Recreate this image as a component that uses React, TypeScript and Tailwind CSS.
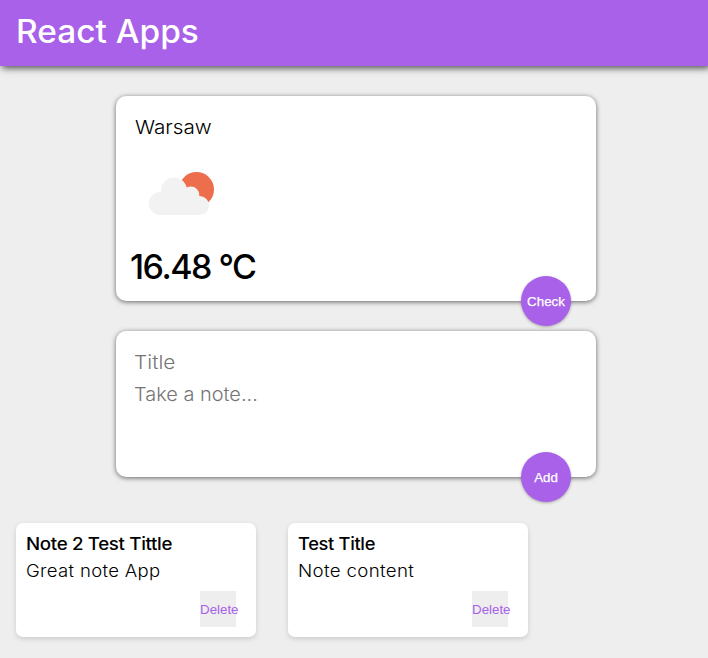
import React from "react";

const notes = [
  { title: "Note 2 Test Tittle", content: "Great note App", titleScale: "scale-x-[1.1]", contentScale: "scale-x-[1.09]" },
  { title: "Test Title", content: "Note content", titleScale: "scale-x-[1.075]", contentScale: "scale-x-[1.1]" },
];

function CloudIcon() {
  return (
    <svg className="block h-[46px] w-[68px]" viewBox="0 0 68 46">
      <circle cx="48.5" cy="20.5" r="17.5" fill="#ec6e4c" />
      <g fill="#f2f2f2">
        <circle cx="12.3" cy="34.5" r="11.5" />
        <circle cx="26" cy="21.5" r="13" />
        <circle cx="42.8" cy="26" r="8.500" />
        <circle cx="51.5" cy="36.500" r="9.500" />
        <path d="M12 29L26 23L42 27L51 34V46H12Z" />
      </g>
    </svg>
  );
}

function RoundButton({ label }: { label: string }) {
  return (
    <button className="absolute right-[25px] -bottom-[25px] flex size-[50px] items-center justify-center rounded-full bg-[#a861e8] pt-[2px] font-['Liberation_Sans',sans-serif] text-[13.333px] text-white shadow-[0_1px_3px_rgba(0,0,0,0.3)] [-webkit-text-stroke:0.25px_white]">
      {label}
    </button>
  );
}

export default function App() {
  return (
    <div className="h-[658px] overflow-hidden bg-[#eeeeee] font-['Inter',sans-serif] text-black">
      <header className="h-[66px] bg-[#a861e8] px-4 pt-[7px] shadow-[2px_2px_7px_rgba(0,0,0,0.7)]">
        <h1 className="text-[32px] leading-[49px] font-medium whitespace-nowrap text-white">
          <span className="inline-block origin-left scale-x-[1.045]">React Apps</span>
        </h1>
      </header>
      <main>
        <section className="relative mt-[30px] ml-[116px] h-[205px] w-[480px] rounded-[10px] bg-white shadow-[0_1px_5px_rgb(100,100,100)]">
          <p className="pt-[18px] pl-[19px] text-[19px] leading-7 font-light">
            <span className="inline-block origin-left scale-x-[1.09]">Warsaw</span>
          </p>
          <div className="mt-[27px] pl-[32px]"><CloudIcon /></div>
          <p className="mt-[28px] pl-[14px] text-[34px] leading-[48px] font-medium tracking-[-1.5px]">16.48 °C</p>
          <RoundButton label="Check" />
        </section>
        <section className="relative mt-[30px] ml-[116px] h-[146px] w-[480px] rounded-[10px] bg-white pt-[16px] pl-[18px] text-[19px] leading-8 font-light text-[#757575] shadow-[0_1px_5px_rgb(100,100,100)]">
          <p><span className="inline-block origin-left scale-x-[1.1]">Title</span></p>
          <p><span className="inline-block origin-left scale-x-[1.05]">Take a note...</span></p>
          <RoundButton label="Add" />
        </section>
        <div className="mt-[46px] flex gap-8 pl-4">
          {notes.map((note) => (
            <article key={note.title} className="h-[114px] w-[240px] rounded-[7px] bg-white px-[10px] pt-[9px] shadow-[0_2px_5px_#cccccc]">
              <h2 className={`w-fit origin-left text-[17px] leading-[24px] font-medium tracking-[-0.3px] ${note.titleScale}`}>{note.title}</h2>
              <p className={`mt-[3px] w-fit origin-left text-[17px] leading-[24px] font-light tracking-[0.3px] ${note.contentScale}`}>{note.content}</p>
              <button className="mt-[8px] ml-[174px] flex size-9 items-center bg-[#eeeeee] pt-[2px] font-['Liberation_Sans',sans-serif] text-[13.333px] text-[#a861e8]">
                Delete
              </button>
            </article>
          ))}
        </div>
      </main>
    </div>
  );
}
